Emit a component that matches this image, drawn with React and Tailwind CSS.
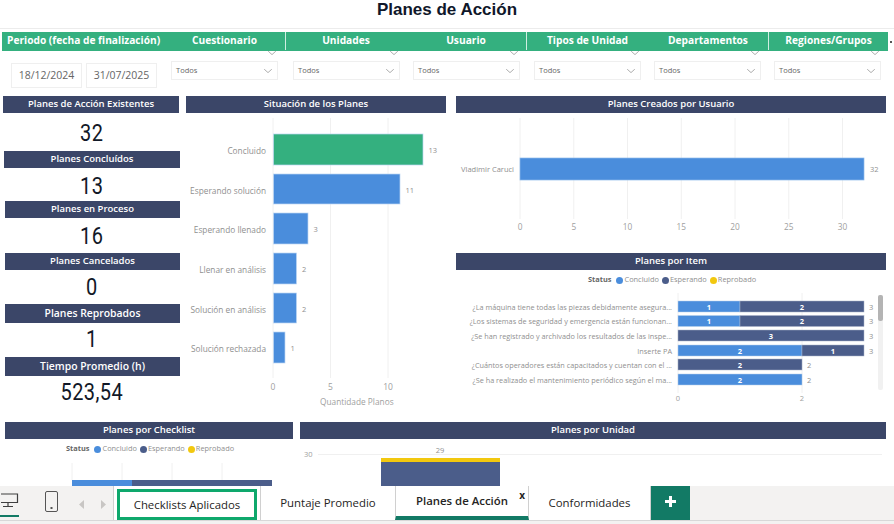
import React from 'react';

const filters = [
  { label: 'Cuestionario', cls: 'w-[121px]' },
  { label: 'Unidades', cls: 'w-[121px] border-l border-[#cfeee2]' },
  { label: 'Usuario', cls: 'w-[120px]' },
  { label: 'Tipos de Unidad', cls: 'w-[122px] border-l border-[#cfeee2]' },
  { label: 'Departamentos', cls: 'w-[120px]' },
  { label: 'Regiones/Grupos', cls: 'w-[120px] border-l border-[#cfeee2]' },
];

const slicers = ['ml-[14px]', 'ml-[15px]', 'ml-[13px]', 'ml-[14px]', 'ml-[13px]', 'ml-[13px]'];

const kpis = [
  { title: 'Planes de Acción Existentes', value: '32', head: 'h-[17px] ml-[3px] w-[176px] text-[9.5px]', body: 'h-[38px] pt-[4px]' },
  { title: 'Planes Concluídos', value: '13', head: 'h-[17px] ml-[4px] w-[176px] text-[9.5px]', body: 'h-[33px] pt-[4px]' },
  { title: 'Planes en Proceso', value: '16', head: 'h-[17px] ml-[5px] w-[175px] text-[9.5px]', body: 'h-[35px] pt-[3px]' },
  { title: 'Planes Cancelados', value: '0', head: 'h-[17px] ml-[5px] w-[175px] text-[9.5px]', body: 'h-[34px] pt-[1px]' },
  { title: 'Planes Reprobados', value: '1', head: 'h-[19px] ml-[5px] w-[175px] text-[10.4px]', body: 'h-[34px] pb-[1px]' },
  { title: 'Tiempo Promedio (h)', value: '523,54', head: 'h-[19px] ml-[5px] w-[175px] text-[10.4px]', body: 'h-[34px] pb-[1px]' },
];

const situacion = [
  { label: 'Concluido', v: 13, y: 21, h: 31, color: '#34b07f' },
  { label: 'Esperando solución', v: 11, y: 61, h: 30, color: '#4a8ddc' },
  { label: 'Esperando llenado', v: 3, y: 100, h: 31, color: '#4a8ddc' },
  { label: 'Llenar en análisis', v: 2, y: 140, h: 31, color: '#4a8ddc' },
  { label: 'Solución en análisis', v: 2, y: 180, h: 30, color: '#4a8ddc' },
  { label: 'Solución rechazada', v: 1, y: 219, h: 31, color: '#4a8ddc' },
];

const items = [
  { label: '¿La máquina tiene todas las piezas debidamente asegura...', a: 1, b: 2, y: 301 },
  { label: '¿Los sistemas de seguridad y emergencia están funcionan...', a: 1, b: 2, y: 315.5 },
  { label: '¿Se han registrado y archivado los resultados de las inspe...', a: 0, b: 3, y: 330 },
  { label: 'Inserte PA', a: 2, b: 1, y: 345 },
  { label: '¿Cuántos operadores están capacitados y cuentan con el ...', a: 0, b: 2, y: 359 },
  { label: '¿Se ha realizado el mantenimiento periódico según el ma...', a: 2, b: 0, y: 374 },
];

const Header = ({ children, className }) => (
  <div className={`flex items-center justify-center bg-[#3b4668] font-semibold text-white ${className}`}>
    {children}
  </div>
);

const Chevron = ({ className }) => (
  <svg viewBox="0 0 8 4" fill="none" stroke="#8a8a8a" strokeWidth="0.7" className={className}>
    <polyline points="0.2,0.2 4,3.6 7.8,0.2" />
  </svg>
);

const SituacionChart = () => (
  <svg width="261" height="280" className="block">
    {[87, 144.5, 202].map((x) => (
      <line key={x} x1={x} x2={x} y1="5" y2="265" stroke="#f0f0f0" />
    ))}
    {situacion.map((s) => (
      <g key={s.label}>
        <text x="80" y={s.y + 19.5} textAnchor="end" fontSize="8.3" fill="#8f8f8f">{s.label}</text>
        <rect x="87.5" y={s.y} width={s.v * 11.5} height={s.h} fill={s.color} stroke="#bcd6f3" strokeWidth="0.7" />
        <text x={87 + s.v * 11.5 + 6} y={s.y + 19} fontSize="7.5" fill="#8f8f8f">{s.v}</text>
      </g>
    ))}
    {[[87, '0'], [144.5, '5'], [202, '10']].map(([x, t]) => (
      <text key={t} x={x} y="277" textAnchor="middle" fontSize="8.5" fill="#a0a0a0">{t}</text>
    ))}
  </svg>
);

const UsuarioChart = () => (
  <svg width="430" height="134" className="block">
    {[0, 5, 10, 15, 20, 25, 30].map((t) => (
      <g key={t}>
        <line x1={64 + t * 10.75} x2={64 + t * 10.75} y1="5" y2="106" stroke="#f0f0f0" />
        <text x={64 + t * 10.75} y="117" textAnchor="middle" fontSize="8.3" fill="#a0a0a0">{t}</text>
      </g>
    ))}
    <rect x="64" y="45" width="344" height="22" fill="#4a8ddc" stroke="#8dbaec" strokeWidth="0.7" />
    <text x="58" y="59" textAnchor="end" fontSize="7.5" fill="#8f8f8f">Vladimir Caruci</text>
    <text x="414" y="59" fontSize="7.5" fill="#8f8f8f">32</text>
  </svg>
);

const Legend = ({ className }) => (
  <div className={`flex items-center whitespace-nowrap text-[7.4px] text-[#8f8f8f] ${className}`}>
    <span className="mr-[5px] font-bold text-[#666666]">Status</span>
    <span className="mr-[1px] h-[7px] w-[7px] rounded-full bg-[#4a8ddc]" />
    <span className="mr-[3px]">Concluido</span>
    <span className="mr-[1px] h-[7px] w-[7px] rounded-full bg-[#4b5d8a]" />
    <span className="mr-[3px]">Esperando</span>
    <span className="mr-[1px] h-[7px] w-[7px] rounded-full bg-[#f2c80f]" />
    <span>Reprobado</span>
  </div>
);

const ItemChart = () => {
  const x0 = 222;
  const unit = 62;
  return (
    <svg width="430" height="125" className="block">
      {[0, 2].map((t) => (
        <line key={t} x1={x0 + t * unit} x2={x0 + t * unit} y1="8" y2="108" stroke="#f0f0f0" />
      ))}
      {items.map((it) => {
        const y = it.y - 285;
        const total = it.a + it.b;
        return (
          <g key={it.label}>
            <text x="216" y={y + 8.5} textAnchor="end" fontSize="7.3" fill="#8f8f8f">{it.label}</text>
            {it.a > 0 && (
              <g>
                <rect x={x0} y={y} width={it.a * unit} height="11" fill="#4a8ddc" stroke="#b6cfea" strokeWidth="0.5" />
                <text x={x0 + (it.a * unit) / 2} y={y + 8.5} textAnchor="middle" fontSize="7.5" fontWeight="700" fill="#ffffff">{it.a}</text>
              </g>
            )}
            {it.b > 0 && (
              <g>
                <rect x={x0 + it.a * unit} y={y} width={it.b * unit} height="11" fill="#4b5d8a" stroke="#a9b2c8" strokeWidth="0.5" />
                <text x={x0 + it.a * unit + (it.b * unit) / 2} y={y + 8.5} textAnchor="middle" fontSize="7.5" fontWeight="700" fill="#ffffff">{it.b}</text>
              </g>
            )}
            <text x={x0 + total * unit + 5} y={y + 8.5} fontSize="7.5" fill="#8f8f8f">{total}</text>
          </g>
        );
      })}
      <text x={x0} y="116" textAnchor="middle" fontSize="7.5" fill="#a0a0a0">0</text>
      <text x={x0 + 2 * unit} y="116" textAnchor="middle" fontSize="7.5" fill="#a0a0a0">2</text>
      <rect x="422" y="10" width="5" height="95" rx="2" fill="#f1f1f1" />
      <rect x="422" y="10" width="5" height="26" rx="2" fill="#b4b4b4" />
    </svg>
  );
};

const ChecklistChart = () => (
  <svg width="288" height="23" className="block">
    {[67, 117, 167, 217].map((x) => (
      <line key={x} x1={x} x2={x} y1="0" y2="17" stroke="#f0f0f0" />
    ))}
    <rect x="67" y="17" width="60" height="6" fill="#4a8ddc" />
    <rect x="127" y="17" width="140" height="6" fill="#4b5d8a" />
  </svg>
);

const UnidadChart = () => (
  <svg width="586" height="47" className="block">
    <text x="4" y="18" fontSize="7.5" fill="#a0a0a0">30</text>
    <line x1="18" x2="582" y1="15.5" y2="15.5" stroke="#f0f0f0" />
    <text x="140" y="14" textAnchor="middle" fontSize="7.5" fill="#8f8f8f">29</text>
    <rect x="81" y="19" width="119" height="4" fill="#f2c80f" />
    <rect x="81" y="23" width="119" height="24" fill="#4b5d8a" />
  </svg>
);

export default function App() {
  return (
    <div className="flex h-[524px] w-[894px] flex-col overflow-hidden bg-white font-['Open_Sans',sans-serif]">
      <div className="h-[32px] shrink-0">
        <div className="h-[29px] border-b border-[#ececec] pt-[1px] text-center font-['Liberation_Sans',sans-serif] text-[17px] font-bold leading-[18px] text-[#0f172a]">
          Planes de Acción
        </div>
      </div>

      {/* barra de filtros */}
      <div className="flex h-[19px] shrink-0 items-center">
        <div className="ml-[2px] flex h-full w-[886px] items-center bg-[#34b07f] pb-[1px] text-[10.2px] font-bold text-white">
          <div className="w-[162px] whitespace-nowrap pl-[5px]">Periodo (fecha de finalización)</div>
          {filters.map((f) => (
            <div key={f.label} className={`flex h-full items-center justify-center whitespace-nowrap ${f.cls}`}>
              {f.label}
            </div>
          ))}
        </div>
        <span className="ml-[2px] h-[2px] w-[2px] bg-[#555555]" />
      </div>

      <div className="flex h-[45px] shrink-0">
        <div className="ml-[11px] mt-[12px] flex h-[25px] w-[71px] items-center justify-center border border-[#efefef] text-[10.5px] text-[#666666]">18/12/2024</div>
        <div className="ml-[4px] mt-[12px] flex h-[25px] w-[71px] items-center justify-center border border-[#efefef] text-[10.5px] text-[#666666]">31/07/2025</div>
        {slicers.map((cls, i) => (
          <div key={i} className={`flex w-[107px] flex-col ${cls}`}>
            <div className="flex h-[10px] justify-end pr-[2px]">
              <Chevron className="h-[4px] w-[8px]" />
            </div>
            <div className="flex h-[19px] items-center justify-between border border-[#efefef] pl-[4px] pr-[5px] text-[7.5px] text-[#666666]">
              Todos
              <Chevron className="h-[4px] w-[8px]" />
            </div>
          </div>
        ))}
      </div>

      {/* cuerpo */}
      <div className="flex h-[326px] shrink-0">
        <div className="w-[180px] shrink-0">
          {kpis.map((k) => (
            <div key={k.title}>
              <Header className={k.head}>{k.title}</Header>
              <div className={`ml-[4px] flex w-[176px] items-center justify-center font-['Roboto',sans-serif] text-[23.5px] tracking-[0.5px] text-[#111827] ${k.body}`}>
                <span className="inline-block scale-x-[0.85]">{k.value}</span>
              </div>
            </div>
          ))}
        </div>

        <div className="ml-[6px] w-[260px] shrink-0">
          <Header className="h-[17px] text-[9.5px]">Situación de los Planes</Header>
          <div className="relative">
            <SituacionChart />
            <div className="absolute left-[134px] top-[283px] whitespace-nowrap text-[8.3px] leading-[11px] text-[#a0a0a0]">Quantidade Planos</div>
          </div>
        </div>

        <div className="ml-[10px] w-[430px] shrink-0">
          <Header className="h-[17px] text-[9.5px]">Planes Creados por Usuario</Header>
          <div className="h-[140px]">
            <UsuarioChart />
          </div>
          <Header className="h-[17px] text-[9.5px]">Planes por Item</Header>
          <Legend className="ml-[132px] mt-[5px] h-[10px]" />
          <ItemChart />
        </div>
      </div>

      {/* fila inferior */}
      <div className="flex h-[64px] shrink-0 overflow-hidden">
        <div className="ml-[5px] w-[288px] shrink-0">
          <Header className="h-[17px] text-[9.5px]">Planes por Checklist</Header>
          <Legend className="ml-[61px] mt-[5px] h-[10px]" />
          <div className="mt-[9px]">
            <ChecklistChart />
          </div>
        </div>
        <div className="ml-[7px] w-[586px] shrink-0">
          <Header className="h-[17px] text-[9.5px]">Planes por Unidad</Header>
          <UnidadChart />
        </div>
      </div>

      {/* pestañas */}
      <div className="h-[38px] shrink-0 bg-[#f3f2f1]">
        <div className="flex h-[35px] border-b border-[#d8d8d8] text-[11.4px] text-[#252423]">
          <div className="flex w-[113px] shrink-0">
            <div className="flex h-[34px] w-[19px] flex-col items-end pt-[7px]">
              <svg width="18" height="15" viewBox="0 0 18 15" fill="none" stroke="#3f3f3f" strokeWidth="1.2">
                <path d="M-2 1H16.5V9.5H-2M7 9.5V13.5M2 13.5H12" />
              </svg>
              <div className="mt-[7px] h-[2px] w-[19px] bg-[#127a65]" />
            </div>
            <div className="ml-[26px] pt-[5px]">
              <svg width="13" height="21" viewBox="0 0 13 21" fill="none">
                <rect x="0.5" y="0.5" width="12" height="20" rx="1.5" stroke="#555555" />
                <rect x="5.5" y="16" width="2" height="2" fill="#555555" />
              </svg>
            </div>
            <div className="ml-[21px] pt-[14px]">
              <svg width="5" height="9" viewBox="0 0 5 9"><polygon points="5,0 5,9 0,4.5" fill="#c8c6c4" /></svg>
            </div>
            <div className="ml-[17px] pt-[14px]">
              <svg width="5" height="9" viewBox="0 0 5 9"><polygon points="0,0 0,9 5,4.5" fill="#c8c6c4" /></svg>
            </div>
          </div>
          <div className="flex w-[147px] shrink-0 items-end border-l border-[#d0d0d0] bg-white px-[3px]">
            <div className="flex h-[31px] w-full items-center justify-center whitespace-nowrap border-[3px] border-[#0ea86c]">
              Checklists Aplicados
            </div>
          </div>
          <div className="flex w-[135px] shrink-0 items-center justify-center whitespace-nowrap border-l border-[#d0d0d0] bg-white">
            Puntaje Promedio
          </div>
          <div className="relative flex w-[134px] shrink-0 items-center justify-center whitespace-nowrap border-x border-b-[4px] border-[#d0d0d0] border-b-[#127a65] bg-white font-semibold">
            Planes de Acción
            <span className="absolute right-[3px] top-[3px] text-[10px] font-bold leading-[12px]">x</span>
          </div>
          <div className="flex w-[122px] shrink-0 items-center justify-center whitespace-nowrap border-r border-[#d0d0d0] bg-white">
            Conformidades
          </div>
          <div className="flex w-[39px] shrink-0 items-center justify-center bg-[#127a65] pb-[4px]">
            <svg width="11" height="11" viewBox="0 0 11 11"><path d="M4 0H7V4H11V7H7V11H4V7H0V4H4Z" fill="#ffffff" /></svg>
          </div>
        </div>
      </div>
    </div>
  );
}
